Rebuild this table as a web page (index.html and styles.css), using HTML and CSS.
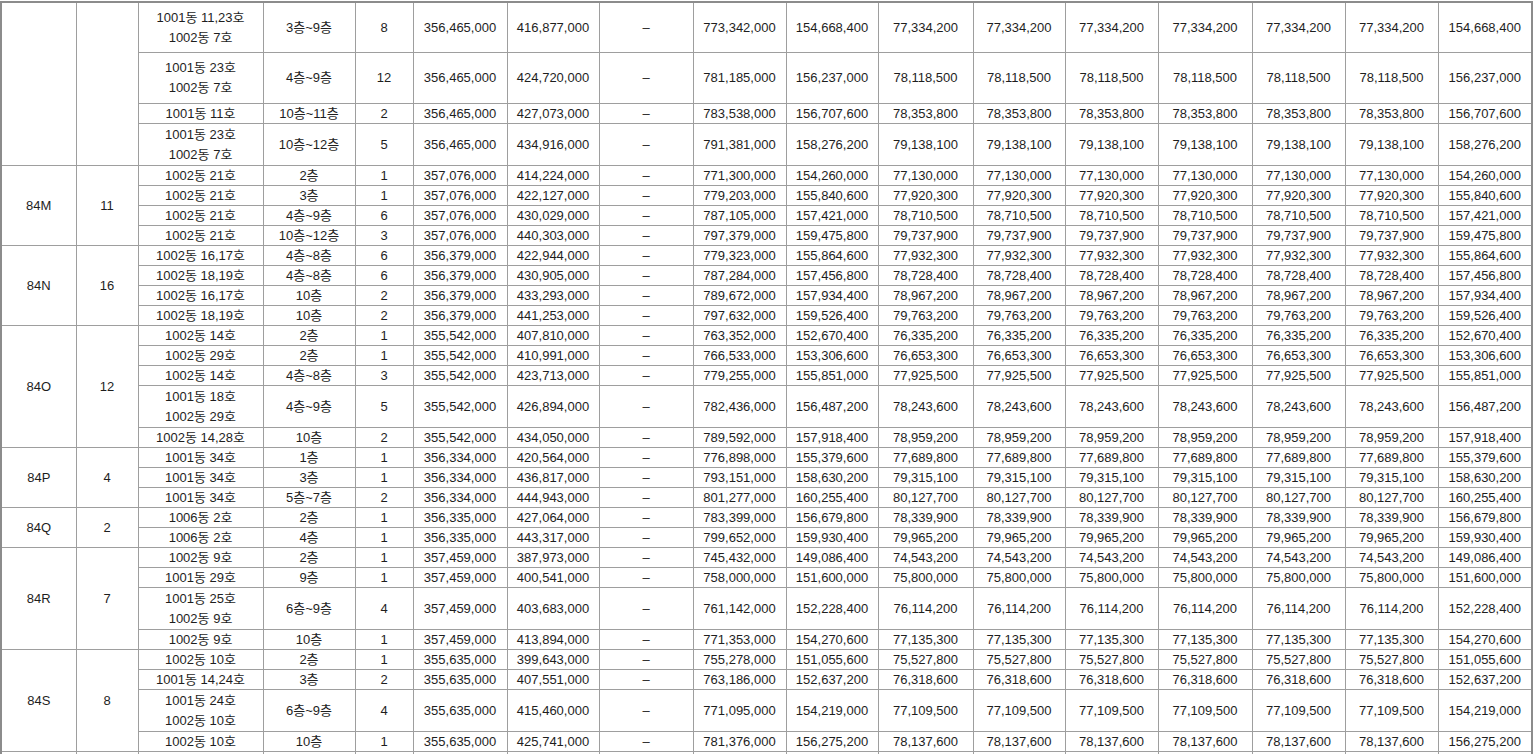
FILE: index.html
```html
<!DOCTYPE html>
<html lang="ko">
<head>
<meta charset="utf-8">
<title>분양가 및 납부일정</title>
<link rel="stylesheet" href="styles.css">
</head>
<body>
<table class="sheet">
<colgroup>
<col class="c-type"><col class="c-cnt"><col class="c-unit"><col class="c-floor"><col class="c-hh">
<col class="c-num"><col class="c-num2"><col class="c-opt"><col class="c-sum"><col class="c-dep">
<col class="c-m1"><col class="c-m2"><col class="c-m3"><col class="c-m4"><col class="c-m5"><col class="c-m6"><col class="c-bal">
</colgroup>
<tbody>
<tr class="r-tall1"><td rowspan="4"></td><td rowspan="4"></td><td>1001동 11,23호<br>1002동 7호</td><td>3층~9층</td><td>8</td><td>356,465,000</td><td>416,877,000</td><td>–</td><td>773,342,000</td><td>154,668,400</td><td>77,334,200</td><td>77,334,200</td><td>77,334,200</td><td>77,334,200</td><td>77,334,200</td><td>77,334,200</td><td>154,668,400</td></tr>
<tr class="r-tall2"><td>1001동 23호<br>1002동 7호</td><td>4층~9층</td><td>12</td><td>356,465,000</td><td>424,720,000</td><td>–</td><td>781,185,000</td><td>156,237,000</td><td>78,118,500</td><td>78,118,500</td><td>78,118,500</td><td>78,118,500</td><td>78,118,500</td><td>78,118,500</td><td>156,237,000</td></tr>
<tr class="r"><td>1001동 11호</td><td>10층~11층</td><td>2</td><td>356,465,000</td><td>427,073,000</td><td>–</td><td>783,538,000</td><td>156,707,600</td><td>78,353,800</td><td>78,353,800</td><td>78,353,800</td><td>78,353,800</td><td>78,353,800</td><td>78,353,800</td><td>156,707,600</td></tr>
<tr class="r2"><td>1001동 23호<br>1002동 7호</td><td>10층~12층</td><td>5</td><td>356,465,000</td><td>434,916,000</td><td>–</td><td>791,381,000</td><td>158,276,200</td><td>79,138,100</td><td>79,138,100</td><td>79,138,100</td><td>79,138,100</td><td>79,138,100</td><td>79,138,100</td><td>158,276,200</td></tr>

<tr class="r grp"><td rowspan="4">84M</td><td rowspan="4">11</td><td>1002동 21호</td><td>2층</td><td>1</td><td>357,076,000</td><td>414,224,000</td><td>–</td><td>771,300,000</td><td>154,260,000</td><td>77,130,000</td><td>77,130,000</td><td>77,130,000</td><td>77,130,000</td><td>77,130,000</td><td>77,130,000</td><td>154,260,000</td></tr>
<tr class="r"><td>1002동 21호</td><td>3층</td><td>1</td><td>357,076,000</td><td>422,127,000</td><td>–</td><td>779,203,000</td><td>155,840,600</td><td>77,920,300</td><td>77,920,300</td><td>77,920,300</td><td>77,920,300</td><td>77,920,300</td><td>77,920,300</td><td>155,840,600</td></tr>
<tr class="r"><td>1002동 21호</td><td>4층~9층</td><td>6</td><td>357,076,000</td><td>430,029,000</td><td>–</td><td>787,105,000</td><td>157,421,000</td><td>78,710,500</td><td>78,710,500</td><td>78,710,500</td><td>78,710,500</td><td>78,710,500</td><td>78,710,500</td><td>157,421,000</td></tr>
<tr class="r"><td>1002동 21호</td><td>10층~12층</td><td>3</td><td>357,076,000</td><td>440,303,000</td><td>–</td><td>797,379,000</td><td>159,475,800</td><td>79,737,900</td><td>79,737,900</td><td>79,737,900</td><td>79,737,900</td><td>79,737,900</td><td>79,737,900</td><td>159,475,800</td></tr>

<tr class="r grp"><td rowspan="4">84N</td><td rowspan="4">16</td><td>1002동 16,17호</td><td>4층~8층</td><td>6</td><td>356,379,000</td><td>422,944,000</td><td>–</td><td>779,323,000</td><td>155,864,600</td><td>77,932,300</td><td>77,932,300</td><td>77,932,300</td><td>77,932,300</td><td>77,932,300</td><td>77,932,300</td><td>155,864,600</td></tr>
<tr class="r"><td>1002동 18,19호</td><td>4층~8층</td><td>6</td><td>356,379,000</td><td>430,905,000</td><td>–</td><td>787,284,000</td><td>157,456,800</td><td>78,728,400</td><td>78,728,400</td><td>78,728,400</td><td>78,728,400</td><td>78,728,400</td><td>78,728,400</td><td>157,456,800</td></tr>
<tr class="r"><td>1002동 16,17호</td><td>10층</td><td>2</td><td>356,379,000</td><td>433,293,000</td><td>–</td><td>789,672,000</td><td>157,934,400</td><td>78,967,200</td><td>78,967,200</td><td>78,967,200</td><td>78,967,200</td><td>78,967,200</td><td>78,967,200</td><td>157,934,400</td></tr>
<tr class="r"><td>1002동 18,19호</td><td>10층</td><td>2</td><td>356,379,000</td><td>441,253,000</td><td>–</td><td>797,632,000</td><td>159,526,400</td><td>79,763,200</td><td>79,763,200</td><td>79,763,200</td><td>79,763,200</td><td>79,763,200</td><td>79,763,200</td><td>159,526,400</td></tr>

<tr class="r grp"><td rowspan="5">84O</td><td rowspan="5">12</td><td>1002동 14호</td><td>2층</td><td>1</td><td>355,542,000</td><td>407,810,000</td><td>–</td><td>763,352,000</td><td>152,670,400</td><td>76,335,200</td><td>76,335,200</td><td>76,335,200</td><td>76,335,200</td><td>76,335,200</td><td>76,335,200</td><td>152,670,400</td></tr>
<tr class="r"><td>1002동 29호</td><td>2층</td><td>1</td><td>355,542,000</td><td>410,991,000</td><td>–</td><td>766,533,000</td><td>153,306,600</td><td>76,653,300</td><td>76,653,300</td><td>76,653,300</td><td>76,653,300</td><td>76,653,300</td><td>76,653,300</td><td>153,306,600</td></tr>
<tr class="r"><td>1002동 14호</td><td>4층~8층</td><td>3</td><td>355,542,000</td><td>423,713,000</td><td>–</td><td>779,255,000</td><td>155,851,000</td><td>77,925,500</td><td>77,925,500</td><td>77,925,500</td><td>77,925,500</td><td>77,925,500</td><td>77,925,500</td><td>155,851,000</td></tr>
<tr class="r2"><td>1001동 18호<br>1002동 29호</td><td>4층~9층</td><td>5</td><td>355,542,000</td><td>426,894,000</td><td>–</td><td>782,436,000</td><td>156,487,200</td><td>78,243,600</td><td>78,243,600</td><td>78,243,600</td><td>78,243,600</td><td>78,243,600</td><td>78,243,600</td><td>156,487,200</td></tr>
<tr class="r"><td>1002동 14,28호</td><td>10층</td><td>2</td><td>355,542,000</td><td>434,050,000</td><td>–</td><td>789,592,000</td><td>157,918,400</td><td>78,959,200</td><td>78,959,200</td><td>78,959,200</td><td>78,959,200</td><td>78,959,200</td><td>78,959,200</td><td>157,918,400</td></tr>

<tr class="r grp"><td rowspan="3">84P</td><td rowspan="3">4</td><td>1001동 34호</td><td>1층</td><td>1</td><td>356,334,000</td><td>420,564,000</td><td>–</td><td>776,898,000</td><td>155,379,600</td><td>77,689,800</td><td>77,689,800</td><td>77,689,800</td><td>77,689,800</td><td>77,689,800</td><td>77,689,800</td><td>155,379,600</td></tr>
<tr class="r"><td>1001동 34호</td><td>3층</td><td>1</td><td>356,334,000</td><td>436,817,000</td><td>–</td><td>793,151,000</td><td>158,630,200</td><td>79,315,100</td><td>79,315,100</td><td>79,315,100</td><td>79,315,100</td><td>79,315,100</td><td>79,315,100</td><td>158,630,200</td></tr>
<tr class="r"><td>1001동 34호</td><td>5층~7층</td><td>2</td><td>356,334,000</td><td>444,943,000</td><td>–</td><td>801,277,000</td><td>160,255,400</td><td>80,127,700</td><td>80,127,700</td><td>80,127,700</td><td>80,127,700</td><td>80,127,700</td><td>80,127,700</td><td>160,255,400</td></tr>

<tr class="r grp"><td rowspan="2">84Q</td><td rowspan="2">2</td><td>1006동 2호</td><td>2층</td><td>1</td><td>356,335,000</td><td>427,064,000</td><td>–</td><td>783,399,000</td><td>156,679,800</td><td>78,339,900</td><td>78,339,900</td><td>78,339,900</td><td>78,339,900</td><td>78,339,900</td><td>78,339,900</td><td>156,679,800</td></tr>
<tr class="r"><td>1006동 2호</td><td>4층</td><td>1</td><td>356,335,000</td><td>443,317,000</td><td>–</td><td>799,652,000</td><td>159,930,400</td><td>79,965,200</td><td>79,965,200</td><td>79,965,200</td><td>79,965,200</td><td>79,965,200</td><td>79,965,200</td><td>159,930,400</td></tr>

<tr class="r grp"><td rowspan="4">84R</td><td rowspan="4">7</td><td>1002동 9호</td><td>2층</td><td>1</td><td>357,459,000</td><td>387,973,000</td><td>–</td><td>745,432,000</td><td>149,086,400</td><td>74,543,200</td><td>74,543,200</td><td>74,543,200</td><td>74,543,200</td><td>74,543,200</td><td>74,543,200</td><td>149,086,400</td></tr>
<tr class="r"><td>1001동 29호</td><td>9층</td><td>1</td><td>357,459,000</td><td>400,541,000</td><td>–</td><td>758,000,000</td><td>151,600,000</td><td>75,800,000</td><td>75,800,000</td><td>75,800,000</td><td>75,800,000</td><td>75,800,000</td><td>75,800,000</td><td>151,600,000</td></tr>
<tr class="r2"><td>1001동 25호<br>1002동 9호</td><td>6층~9층</td><td>4</td><td>357,459,000</td><td>403,683,000</td><td>–</td><td>761,142,000</td><td>152,228,400</td><td>76,114,200</td><td>76,114,200</td><td>76,114,200</td><td>76,114,200</td><td>76,114,200</td><td>76,114,200</td><td>152,228,400</td></tr>
<tr class="r"><td>1002동 9호</td><td>10층</td><td>1</td><td>357,459,000</td><td>413,894,000</td><td>–</td><td>771,353,000</td><td>154,270,600</td><td>77,135,300</td><td>77,135,300</td><td>77,135,300</td><td>77,135,300</td><td>77,135,300</td><td>77,135,300</td><td>154,270,600</td></tr>

<tr class="r grp"><td rowspan="4">84S</td><td rowspan="4">8</td><td>1002동 10호</td><td>2층</td><td>1</td><td>355,635,000</td><td>399,643,000</td><td>–</td><td>755,278,000</td><td>151,055,600</td><td>75,527,800</td><td>75,527,800</td><td>75,527,800</td><td>75,527,800</td><td>75,527,800</td><td>75,527,800</td><td>151,055,600</td></tr>
<tr class="r"><td>1001동 14,24호</td><td>3층</td><td>2</td><td>355,635,000</td><td>407,551,000</td><td>–</td><td>763,186,000</td><td>152,637,200</td><td>76,318,600</td><td>76,318,600</td><td>76,318,600</td><td>76,318,600</td><td>76,318,600</td><td>76,318,600</td><td>152,637,200</td></tr>
<tr class="r2"><td>1001동 24호<br>1002동 10호</td><td>6층~9층</td><td>4</td><td>355,635,000</td><td>415,460,000</td><td>–</td><td>771,095,000</td><td>154,219,000</td><td>77,109,500</td><td>77,109,500</td><td>77,109,500</td><td>77,109,500</td><td>77,109,500</td><td>77,109,500</td><td>154,219,000</td></tr>
<tr class="r"><td>1002동 10호</td><td>10층</td><td>1</td><td>355,635,000</td><td>425,741,000</td><td>–</td><td>781,376,000</td><td>156,275,200</td><td>78,137,600</td><td>78,137,600</td><td>78,137,600</td><td>78,137,600</td><td>78,137,600</td><td>78,137,600</td><td>156,275,200</td></tr>

<tr class="r grp"><td></td><td></td><td></td><td></td><td></td><td></td><td></td><td></td><td></td><td></td><td></td><td></td><td></td><td></td><td></td><td></td><td></td></tr>
</tbody>
</table>
</body>
</html>
```

FILE: styles.css
```css
html, body {
  margin: 0;
  padding: 0;
  background: #ffffff;
  overflow: hidden;
}

.sheet {
  border-collapse: collapse;
  table-layout: fixed;
  width: 1533px;
  margin-top: 1px;
  border: 2px solid #8c8c8c;
  font-family: "Liberation Sans", "Noto Sans CJK KR", sans-serif;
  font-size: 13px;
  line-height: 20px;
  color: #1e1e1e;
}

.sheet td {
  border: 1px solid #9e9e9e;
  padding: 0;
  text-align: center;
  vertical-align: middle;
  white-space: nowrap;
  overflow: hidden;
}

.r td { height: 19px; line-height: 19px; }
.r2 td { height: 41px; }
.r-tall1 td { height: 49px; }
.r-tall2 td { height: 50px; }

.c-type { width: 75px; }
.c-cnt { width: 62px; }
.c-unit { width: 125px; }
.c-floor { width: 92px; }
.c-hh { width: 58px; }
.c-num { width: 94px; }
.c-num2 { width: 92px; }
.c-opt { width: 94px; }
.c-sum { width: 93px; }
.c-dep { width: 92px; }
.c-m1 { width: 95px; }
.c-m2 { width: 92px; }
.c-m3 { width: 93px; }
.c-m4 { width: 94px; }
.c-m5 { width: 93px; }
.c-m6 { width: 93px; }
.c-bal { width: 94px; }
```
